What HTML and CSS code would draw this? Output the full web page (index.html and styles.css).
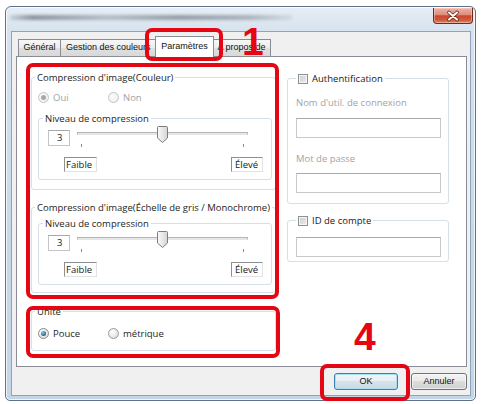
FILE: index.html
```html
<!DOCTYPE html>
<html lang="fr">
<head>
<meta charset="utf-8">
<title>Paramètres</title>
<link rel="stylesheet" href="styles.css">
</head>
<body>
<div class="page">
  <div class="window">
    <div class="titlebar">
      <div class="title-blur"></div>
      <div class="close">
        <svg width="38" height="14" viewBox="0 0 38 14">
          <path d="M15 3.5 L23 10.5 M23 3.5 L15 10.5" stroke="#6a2618" stroke-width="3.6" stroke-linecap="round"/>
          <path d="M15 3.5 L23 10.5 M23 3.5 L15 10.5" stroke="#ffffff" stroke-width="2" stroke-linecap="round"/>
        </svg>
      </div>
    </div>
    <div class="client">
      <div class="tabs">
        <div class="tab t-gen">Général</div>
        <div class="tab t-ges">Gestion des couleurs</div>
        <div class="tab sel">Paramètres</div>
        <div class="tab t-apr">A propos de</div>
      </div>
      <div class="panel">
        <div class="col-left">
          <div class="group g1">
            <div class="legend">Compression d'image(Couleur)</div>
            <div class="radios">
              <div class="ropt dis"><span class="rd on"></span>Oui</div>
              <div class="ropt dis"><span class="rd"></span>Non</div>
            </div>
            <div class="group inner">
              <div class="legend">Niveau de compression</div>
              <div class="srow">
                <div class="num">3</div>
                <div class="slider">
                  <div class="track"></div>
                  <span class="tick t-l"></span>
                  <span class="tick t-r"></span>
                  <svg class="thumb" width="11" height="18" viewBox="0 0 11 18">
                    <defs><linearGradient id="tg1" x1="0" x2="1" y1="0" y2="0"><stop offset="0" stop-color="#fbfbfb"/><stop offset="1" stop-color="#d4d4d4"/></linearGradient></defs>
                    <path d="M1.5 0.5 H9.5 Q10.5 0.5 10.5 1.5 V12 L5.5 16.5 L0.5 12 V1.5 Q0.5 0.5 1.5 0.5 Z" fill="url(#tg1)" stroke="#7d7d7d"/>
                  </svg>
                </div>
              </div>
              <div class="lrow">
                <span class="lab l-f">Faible</span>
                <span class="lab l-e">Élevé</span>
              </div>
            </div>
          </div>
          <div class="group g2">
            <div class="legend">Compression d'image(Échelle de gris / Monochrome)</div>
            <div class="group inner">
              <div class="legend">Niveau de compression</div>
              <div class="srow">
                <div class="num">3</div>
                <div class="slider">
                  <div class="track"></div>
                  <span class="tick t-l"></span>
                  <span class="tick t-r"></span>
                  <svg class="thumb" width="11" height="18" viewBox="0 0 11 18">
                    <defs><linearGradient id="tg2" x1="0" x2="1" y1="0" y2="0"><stop offset="0" stop-color="#fbfbfb"/><stop offset="1" stop-color="#d4d4d4"/></linearGradient></defs>
                    <path d="M1.5 0.5 H9.5 Q10.5 0.5 10.5 1.5 V12 L5.5 16.5 L0.5 12 V1.5 Q0.5 0.5 1.5 0.5 Z" fill="url(#tg2)" stroke="#7d7d7d"/>
                  </svg>
                </div>
              </div>
              <div class="lrow">
                <span class="lab l-f">Faible</span>
                <span class="lab l-e">Élevé</span>
              </div>
            </div>
          </div>
          <div class="group g3">
            <div class="legend">Unité</div>
            <div class="radios">
              <div class="ropt"><span class="rd on blue"></span>Pouce</div>
              <div class="ropt"><span class="rd"></span>métrique</div>
            </div>
          </div>
        </div>
        <div class="col-right">
          <div class="group auth">
            <div class="legend cblegend"><span class="cb"></span>Authentification</div>
            <div class="flabel">Nom d'util. de connexion</div>
            <div class="tb tb1"></div>
            <div class="flabel fl2">Mot de passe</div>
            <div class="tb tb2"></div>
          </div>
          <div class="group idg">
            <div class="legend cblegend"><span class="cb"></span>ID de compte</div>
            <div class="tb tb3"></div>
          </div>
        </div>
      </div>
      <div class="buttons">
        <div class="btn ok">OK</div>
        <div class="btn cancel">Annuler</div>
      </div>
    </div>
  </div>

  <div class="ann a-tab"></div>
  <div class="ann a-main"></div>
  <div class="ann a-unit"></div>
  <div class="ann a-ok"></div>
  <div class="step s1">1</div>
  <div class="step s4">4</div>
</div>
</body>
</html>
```

FILE: styles.css
```css
* { box-sizing: border-box; margin: 0; padding: 0; }

body {
  margin: 0;
  background: #ffffff;
  font-family: "Open Sans", "Noto Sans", sans-serif;
  font-size: 9.5px;
  color: #1e1e1e;
}

.page {
  position: relative;
  width: 482px;
  height: 404px;
  overflow: hidden;
  padding: 6px 0 0 5px;
}

/* window frame */
.window {
  width: 471px;
  height: 395px;
  border: 1px solid #5f7289;
  border-radius: 6px 6px 5px 5px;
  background: linear-gradient(#e6edf5, #d6e2ee 26px, #c9d8e9 60%, #c4d5e8);
  box-shadow: inset 0 0 0 1px rgba(255, 255, 255, 0.75);
  display: flex;
  flex-direction: column;
}

.titlebar {
  height: 24px;
  display: flex;
  justify-content: space-between;
  align-items: flex-start;
  padding-left: 4px;
}

.title-blur {
  width: 282px;
  height: 5px;
  margin-top: 8px;
  background: linear-gradient(90deg, rgba(110, 118, 128, 0.2), rgba(95, 104, 115, 0.65) 8%, rgba(130, 138, 148, 0.45) 35%, rgba(100, 108, 118, 0.6) 60%, rgba(120, 128, 138, 0.5) 85%, rgba(140, 148, 158, 0.15));
  filter: blur(1.4px);
}

.close {
  width: 40px;
  height: 16px;
  margin: 1px 2px 0 0;
  border: 1px solid #6e2a1c;
  border-top: none;
  border-radius: 0 0 4px 4px;
  background: linear-gradient(#eab3a6 0%, #df8d7b 45%, #c9472d 52%, #cf5a3c 80%, #e0876b 100%);
  box-shadow: inset 0 0 0 1px rgba(255, 220, 210, 0.45);
  display: flex;
  align-items: center;
  justify-content: center;
}

.close svg { display: block; }

/* client area */
.client {
  flex: 1;
  margin: 0 4px 4px 5px;
  border: 1px solid #8ea3bc;
  background: #f0f0f0;
  display: flex;
  flex-direction: column;
}

.tabs {
  height: 24px;
  padding: 4px 0 0 6px;
  display: flex;
  align-items: flex-end;
  font-family: "Liberation Sans", Arial, sans-serif;
  font-size: 9px;
  color: #111;
}

.tab {
  height: 17px;
  border: 1px solid #898c95;
  border-bottom: none;
  background: linear-gradient(#f7f7f7, #ececec 50%, #e0e0e0 50%, #d8d8d8);
  text-align: center;
  line-height: 15px;
  white-space: nowrap;
  overflow: hidden;
}

.t-gen { width: 43px; }
.t-ges { width: 98px; margin-left: -1px; text-align: left; padding-left: 5px; }
.tab.sel {
  width: 59px;
  height: 21px;
  margin: 0 -2px -1px -3px;
  background: #ffffff;
  position: relative;
  z-index: 1;
  line-height: 19px;
}
.t-apr { width: 59px; }

.panel {
  height: 311px;
  margin: 0 3px 0 4px;
  border: 1px solid #898c95;
  background: #ffffff;
  display: grid;
  grid-template-columns: 245px 162px;
  column-gap: 11px;
  align-items: start;
  padding: 20px 0 0 14px;
}

/* group boxes */
.group {
  border: 1px solid #d5dfe5;
  border-radius: 3px;
}

.legend {
  display: flex;
  align-items: center;
  width: max-content;
  height: 13px;
  line-height: 13px;
  margin: -7px 0 0 3px;
  padding: 0 2px;
  background: #ffffff;
  color: #1e1e1e;
  white-space: nowrap;
}

.g1 { padding-bottom: 9px; }
.g2 { margin-top: 17px; padding-bottom: 7px; }
.g2 .inner { margin-top: 9px; }
.g3 { margin-top: 18px; padding-bottom: 10px; }
.g3 .radios { margin-top: 9px; }

.radios {
  display: flex;
  height: 13px;
  margin-top: 7px;
  padding-left: 6px;
}

.ropt {
  width: 70px;
  display: flex;
  align-items: center;
  gap: 4px;
  line-height: 13px;
}

.ropt.dis { color: #a3a3a3; }

.rd {
  width: 11px;
  height: 11px;
  border-radius: 50%;
  border: 1px solid #9a9a9a;
  background: radial-gradient(circle at 35% 35%, #ffffff, #e2e2e2 70%, #d0d0d0);
  display: flex;
  align-items: center;
  justify-content: center;
  flex: none;
}

.dis .rd { border-color: #c4c4c4; background: radial-gradient(circle at 35% 35%, #fbfbfb, #ececec); }

.rd.on::after {
  content: "";
  width: 5px;
  height: 5px;
  border-radius: 50%;
  background: #a8a8a8;
}

.rd.on.blue { border-color: #8a8a8a; }
.rd.on.blue::after { background: radial-gradient(circle at 40% 35%, #8fd0ee, #2a6a96 60%, #1c4e74); }

.inner {
  margin: 14px 3px 0 6px;
  padding-bottom: 7px;
}

.inner .legend { margin-left: 4px; }

.srow {
  display: flex;
  height: 16px;
  margin-top: 5px;
  padding-left: 9px;
}

.num {
  width: 22px;
  height: 16px;
  border: 1px solid #c2c4c8;
  border-top-color: #a6a8ac;
  padding-left: 8px;
  line-height: 14px;
  background: #fff;
}

.slider {
  position: relative;
  width: 176px;
  height: 21px;
  margin: -4px 0 0 5px;
}

.track {
  width: 171px;
  height: 3px;
  margin: 6px 0 0 2px;
  border: 1px solid #b4b4b4;
  border-bottom-color: #e4e4e4;
  background: #e9e9e9;
  border-radius: 1px;
}

.tick {
  position: absolute;
  top: 18px;
  width: 1px;
  height: 3px;
  background: #8a8a8a;
}
.t-l { left: 6px; }
.t-r { left: 168px; }

.thumb {
  position: absolute;
  left: 82px;
  top: 0;
}

.lrow {
  display: flex;
  justify-content: space-between;
  margin-top: 11px;
  padding: 0 8px 0 25px;
}

.lab {
  height: 15px;
  border: 1px solid;
  border-color: #8e8e8e #e2e2e2 #e2e2e2 #8e8e8e;
  padding-left: 1px;
  line-height: 13px;
  color: #222;
}
.l-f { width: 33px; }
.l-e { width: 32px; padding-left: 3px; }

/* right column */
.auth {
  margin-top: 1px;
  padding: 0 7px 10px 8px;
}

.cblegend {
  margin-left: 0;
  gap: 4px;
  color: #1a1a1a;
}

.cb {
  width: 10px;
  height: 10px;
  border: 1px solid #8e8f8f;
  background: linear-gradient(135deg, #c9ccd0, #eeeeef);
  box-shadow: inset 0 0 0 1px #f6f6f6;
  flex: none;
}

.flabel {
  height: 13px;
  line-height: 13px;
  margin-top: 11px;
  color: #a3a3a3;
}
.flabel.fl2 { margin-top: 14px; }

.tb {
  height: 20px;
  border: 1px solid #c7c9cc;
  border-top-color: #a8aaae;
  background: #ffffff;
}
.tb1 { margin-top: 9px; }
.tb2 { margin-top: 8px; }

.idg {
  margin-top: 16px;
  padding: 0 7px 4px 8px;
}
.tb3 { margin-top: 10px; }

/* buttons */
.buttons {
  display: flex;
  justify-content: flex-end;
  gap: 13px;
  padding: 6px 3px 0 0;
}

.btn {
  height: 17px;
  border: 1px solid #707070;
  border-radius: 3px;
  background: linear-gradient(#f3f3f3, #ebebeb 45%, #dddddd 50%, #cfcfcf);
  box-shadow: inset 0 0 0 1px rgba(255, 255, 255, 0.6);
  font-family: "Liberation Sans", Arial, sans-serif;
  font-size: 9px;
  color: #111;
  text-align: center;
  line-height: 15px;
}

.btn.ok {
  width: 64px;
  border-color: #3c7fb1;
  box-shadow: inset 0 0 0 1px #a9dff5;
  background: linear-gradient(#f0f6fa, #e6eef4 45%, #d8e2ea 50%, #cdd9e2);
}

.btn.cancel { width: 56px; }

/* annotations */
.ann {
  position: absolute;
  border: 4px solid #e40613;
  border-radius: 7px;
}
.a-tab { left: 145px; top: 28px; width: 78px; height: 33px; }
.a-main { left: 26px; top: 63px; width: 253px; height: 236px; }
.a-unit { left: 26px; top: 306px; width: 254px; height: 52px; }
.a-ok { left: 320px; top: 364px; width: 90px; height: 37px; }

.step {
  position: absolute;
  font-family: "Liberation Sans", Arial, sans-serif;
  font-weight: bold;
  font-size: 39px;
  line-height: 39px;
  color: #e40613;
}
.s1 { left: 242px; top: 22px; }
.s4 { left: 354px; top: 317px; }
```
